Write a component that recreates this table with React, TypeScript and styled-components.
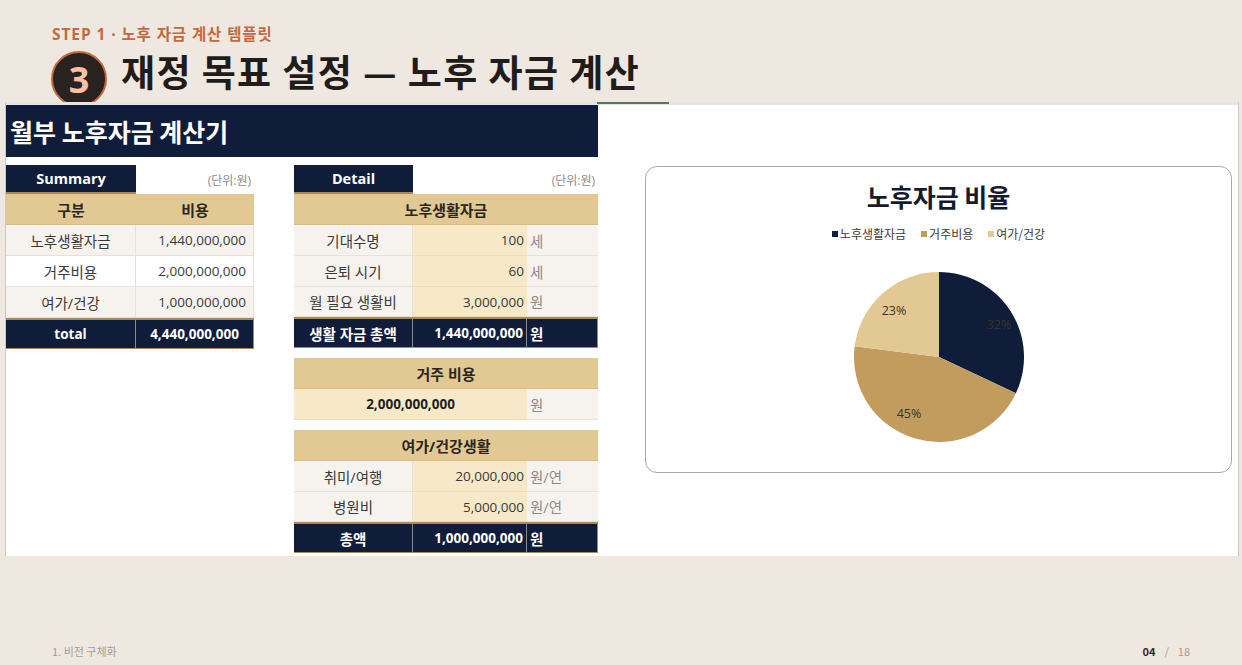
import React from 'react';
import styled, { createGlobalStyle } from 'styled-components';

const GlobalStyle = createGlobalStyle`
  html, body {
    margin: 0;
    padding: 0;
    background: #efe8e0;
  }
  * {
    box-sizing: border-box;
  }
  body {
    font-family: "Open Sans", "Noto Sans CJK KR", sans-serif;
  }
`;

type Tone = 'title' | 'head' | 'row' | 'plain' | 'cream' | 'unit' | 'total' | 'note';
type Align = 'left' | 'center' | 'right';

const NAVY = '#0f1d3a';
const TAN = '#e2c993';
const GOLD = '#c29c5c';
const CREAM = '#f7e8c7';
const ROW = '#f6f3ee';

const summaryRows = [
  { label: '노후생활자금', value: '1,440,000,000', tone: 'row' as Tone },
  { label: '거주비용', value: '2,000,000,000', tone: 'plain' as Tone },
  { label: '여가/건강', value: '1,000,000,000', tone: 'row' as Tone },
];

const lifeRows = [
  { label: '기대수명', value: '100', unit: '세' },
  { label: '은퇴 시기', value: '60', unit: '세' },
  { label: '월 필요 생활비', value: '3,000,000', unit: '원' },
];

const leisureRows = [
  { label: '취미/여행', value: '20,000,000', unit: '원/연' },
  { label: '병원비', value: '5,000,000', unit: '원/연' },
];

const slices = [
  { name: '노후생활자금', pct: 32, color: NAVY, lx: 145, ly: 57 },
  { name: '거주비용', pct: 45, color: GOLD, lx: 55, ly: 146 },
  { name: '여가/건강', pct: 23, color: TAN, lx: 40, ly: 43 },
];

function slicePath(startPct: number, pct: number, r: number) {
  const a0 = (startPct / 100) * Math.PI * 2 - Math.PI / 2;
  const a1 = ((startPct + pct) / 100) * Math.PI * 2 - Math.PI / 2;
  const x0 = r + r * Math.cos(a0);
  const y0 = r + r * Math.sin(a0);
  const x1 = r + r * Math.cos(a1);
  const y1 = r + r * Math.sin(a1);
  const large = pct > 50 ? 1 : 0;
  return `M ${r} ${r} L ${x0} ${y0} A ${r} ${r} 0 ${large} 1 ${x1} ${y1} Z`;
}

function PieChart() {
  let acc = 0;
  return (
    <svg width="170" height="170" viewBox="0 0 170 170">
      {slices.map((s) => {
        const d = slicePath(acc, s.pct, 85);
        acc += s.pct;
        return <path key={s.name} d={d} fill={s.color} />;
      })}
      {slices.map((s) => (
        <text
          key={`label-${s.name}`}
          x={s.lx}
          y={s.ly}
          textAnchor="middle"
          fontSize="12.5"
          fontFamily='"Open Sans", sans-serif'
          fill="#3a3328"
        >
          {s.pct}%
        </text>
      ))}
    </svg>
  );
}

export default function App() {
  return (
    <>
      <GlobalStyle />
      <Page>
        <Header>
          <StepLabel>STEP 1 · 노후 자금 계산 템플릿</StepLabel>
          <TitleRow>
            <StepBadge>3</StepBadge>
            <Title>재정 목표 설정 — 노후 자금 계산</Title>
          </TitleRow>
        </Header>

        <Sheet>
          <ColumnStrip>
            <StripSelected />
          </ColumnStrip>
          <SheetBody>
            <LeftPane>
              <Banner>월부 노후자금 계산기</Banner>
              <TablesRow>
                <Table $cols="130px 118px" $rows="29px repeat(5, 31px)">
                  <Cell $tone="title">Summary</Cell>
                  <Cell $tone="note" $align="right">(단위:원)</Cell>
                  <Cell $tone="head">구분</Cell>
                  <Cell $tone="head">비용</Cell>
                  {summaryRows.map((row) => (
                    <React.Fragment key={row.label}>
                      <Cell $tone={row.tone}>{row.label}</Cell>
                      <Cell $tone={row.tone} $align="right" $num $inset>
                        {row.value}
                      </Cell>
                    </React.Fragment>
                  ))}
                  <Cell $tone="total" $num>total</Cell>
                  <Cell $tone="total" $num>4,440,000,000</Cell>
                </Table>

                <DetailColumn>
                  <Table $cols="119px 114px 71px" $rows="29px repeat(3, 31px) 30px 31px">
                    <Cell $tone="title">Detail</Cell>
                    <Cell $tone="note" $align="right" $span={2}>(단위:원)</Cell>
                    <Cell $tone="head" $span={3}>노후생활자금</Cell>
                    {lifeRows.map((row) => (
                      <React.Fragment key={row.label}>
                        <Cell $tone="row">{row.label}</Cell>
                        <Cell $tone="cream" $align="right" $num>{row.value}</Cell>
                        <Cell $tone="unit" $align="left">{row.unit}</Cell>
                      </React.Fragment>
                    ))}
                    <Cell $tone="total">생활 자금 총액</Cell>
                    <Cell $tone="total" $align="right" $num>1,440,000,000</Cell>
                    <Cell $tone="total" $align="left">원</Cell>
                  </Table>

                  <Table $cols="119px 114px 71px" $rows="31px 31px">
                    <Cell $tone="head" $span={3}>거주 비용</Cell>
                    <Cell $tone="cream" $span={2} $bold $num>2,000,000,000</Cell>
                    <Cell $tone="unit" $align="left">원</Cell>
                  </Table>

                  <Table $cols="119px 114px 71px" $rows="31px 31px 30px 31px">
                    <Cell $tone="head" $span={3}>여가/건강생활</Cell>
                    {leisureRows.map((row) => (
                      <React.Fragment key={row.label}>
                        <Cell $tone="row">{row.label}</Cell>
                        <Cell $tone="cream" $align="right" $num>{row.value}</Cell>
                        <Cell $tone="unit" $align="left">{row.unit}</Cell>
                      </React.Fragment>
                    ))}
                    <Cell $tone="total">총액</Cell>
                    <Cell $tone="total" $align="right" $num>1,000,000,000</Cell>
                    <Cell $tone="total" $align="left">원</Cell>
                  </Table>
                </DetailColumn>
              </TablesRow>
            </LeftPane>

            <RightPane>
              <ChartCard>
                <ChartTitle>노후자금 비율</ChartTitle>
                <Legend>
                  {slices.map((s) => (
                    <LegendItem key={`legend-${s.name}`}>
                      <LegendSwatch $color={s.color} />
                      {s.name}
                    </LegendItem>
                  ))}
                </Legend>
                <PieWrap>
                  <PieChart />
                </PieWrap>
              </ChartCard>
            </RightPane>
          </SheetBody>
        </Sheet>

        <Footer>
          <FooterText>1. 비전 구체화</FooterText>
          <PageNumber>
            <strong>04</strong>
            <span>/</span>
            <span>18</span>
          </PageNumber>
        </Footer>
      </Page>
    </>
  );
}

const Page = styled.div`
  width: 1242px;
  height: 665px;
  overflow: hidden;
  display: flex;
  flex-direction: column;
  background: #efe8e0;
`;
const Header = styled.div`
  display: flex;
  flex-direction: column;
  padding: 24px 0 0 52px;
`;
const StepLabel = styled.div`
  font-size: 15.5px;
  line-height: 21px;
  font-weight: 700;
  color: #c5683f;
  letter-spacing: 0.9px;
`;
const TitleRow = styled.div`
  height: 57px;
  display: flex;
  flex-direction: row;
  align-items: flex-start;
  gap: 14px;
  margin-left: -1px;
`;
const StepBadge = styled.div`
  flex: none;
  width: 56px;
  height: 56px;
  margin-top: 6px;
  border-radius: 50%;
  background: #2a221e;
  border: 2px solid #c5683f;
  color: #f6c2a2;
  font-size: 36px;
  font-weight: 700;
  display: flex;
  align-items: center;
  justify-content: center;
  line-height: 1;
  padding-top: 2px;
`;
const Title = styled.h1`
  margin: 2px 0 0;
  font-size: 37px;
  line-height: 48px;
  font-weight: 700;
  color: #1f1c1a;
  letter-spacing: 1.4px;
  font-family: "Noto Sans CJK KR", sans-serif;
`;
const Sheet = styled.div`
  position: relative;
  z-index: 1;
  margin-left: 5px;
  width: 1234px;
  height: 454px;
  background: #ffffff;
  border-left: 1px solid #c9c9c9;
  border-right: 1px solid #c9c9c9;
  display: flex;
  flex-direction: column;
`;
const ColumnStrip = styled.div`
  height: 3px;
  background: #e4e4e4;
  display: flex;
  padding-left: 591px;
`;
const StripSelected = styled.div`
  width: 72px;
  height: 2px;
  background: #4f7a5b;
`;
const SheetBody = styled.div`
  flex: 1;
  display: flex;
  flex-direction: row;
`;
const LeftPane = styled.div`
  width: 592px;
  display: flex;
  flex-direction: column;
`;
const Banner = styled.div`
  height: 52px;
  background: ${NAVY};
  color: #ffffff;
  font-size: 25px;
  font-weight: 700;
  font-family: "Noto Sans CJK KR", sans-serif;
  display: flex;
  align-items: center;
  padding-left: 4px;
`;
const TablesRow = styled.div`
  display: flex;
  flex-direction: row;
  align-items: flex-start;
  gap: 40px;
  margin-top: 8px;
`;
const DetailColumn = styled.div`
  display: flex;
  flex-direction: column;
  gap: 10px;
`;
const Table = styled.div<{ $cols: string; $rows: string }>`
  display: grid;
  grid-template-columns: ${({ $cols }) => $cols};
  grid-template-rows: ${({ $rows }) => $rows};
`;

const toneStyles: Record<Tone, string> = {
  title: `background:${NAVY};color:#fff;font-weight:700;border-bottom:2px solid #a88a56;`,
  head: `background:${TAN};color:#2b261f;font-weight:700;font-size:15px;border-bottom:1px solid #d6bb84;`,
  row: `background:${ROW};color:#3a3a3a;border-bottom:1px solid #e7e1d7;border-right:1px solid #e7e1d7;`,
  plain: `background:#fff;color:#3a3a3a;border-bottom:1px solid #e7e1d7;border-right:1px solid #e7e1d7;`,
  cream: `background:${CREAM};color:#3a3a3a;border-bottom:1px solid #eedcb6;`,
  unit: `background:${ROW};color:#8a8a8a;border-bottom:1px solid #e7e1d7;`,
  total: `background:${NAVY};color:#fff;font-weight:700;border-top:2px solid #a88a56;border-right:1px solid #8b8b8b;border-bottom:1px solid #a88a56;`,
  note: `background:#fff;color:#8c8c8c;font-size:12px;`,
};

const Cell = styled.div<{
  $tone: Tone;
  $align?: Align;
  $span?: number;
  $bold?: boolean;
  $num?: boolean;
  $inset?: boolean;
}>`
  grid-column: span ${({ $span }) => $span ?? 1};
  display: flex;
  align-items: center;
  justify-content: ${({ $align }) =>
    $align === 'left' ? 'flex-start' : $align === 'right' ? 'flex-end' : 'center'};
  padding: 0 ${({ $inset }) => ($inset ? '7px' : '3px')} 0 3px;
  font-size: 14.5px;
  white-space: nowrap;
  ${({ $tone }) => toneStyles[$tone]}
  ${({ $num }) => ($num ? 'font-size: 13.5px; font-family: "Open Sans", sans-serif;' : '')}
  ${({ $bold }) => ($bold ? 'font-weight: 700; color: #1f1f1f;' : '')}
`;

const RightPane = styled.div`
  flex: 1;
  padding: 61px 7px 0 47px;
`;
const ChartCard = styled.div`
  width: 587px;
  height: 307px;
  border: 1px solid #a9a9a9;
  border-radius: 12px;
  display: flex;
  flex-direction: column;
  align-items: center;
  padding-top: 12px;
`;
const ChartTitle = styled.div`
  font-family: "Noto Sans CJK KR", sans-serif;
  font-size: 25px;
  line-height: 34px;
  font-weight: 700;
  color: #161b2c;
`;
const Legend = styled.div`
  display: flex;
  flex-direction: row;
  gap: 15px;
  margin-top: 13px;
  font-family: "Noto Sans CJK KR", sans-serif;
  font-size: 12px;
  line-height: 16px;
  color: #3a3a3a;
`;
const LegendItem = styled.div`
  display: flex;
  align-items: center;
  gap: 2px;
`;
const LegendSwatch = styled.span<{ $color: string }>`
  width: 6px;
  height: 6px;
  background: ${({ $color }) => $color};
`;
const PieWrap = styled.div`
  margin-top: 30px;
  width: 170px;
  height: 170px;
`;
const Footer = styled.div`
  margin-top: auto;
  display: flex;
  flex-direction: row;
  justify-content: space-between;
  align-items: center;
  padding: 0 52px 0 52px;
  height: 28px;
  font-size: 11px;
  font-family: "Noto Sans CJK KR", sans-serif;
`;
const FooterText = styled.span`
  color: #a39d94;
`;
const PageNumber = styled.span`
  display: flex;
  gap: 9px;
  color: #a39d94;
  strong {
    color: #2f2f2f;
    font-weight: 700;
  }
`;
